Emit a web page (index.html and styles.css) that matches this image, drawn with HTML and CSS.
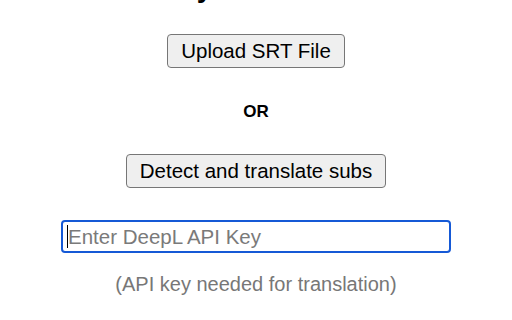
FILE: index.html
```html
<!DOCTYPE html>
<html>
<head>
<meta charset="utf-8">
<link rel="stylesheet" href="styles.css">
</head>
<body>
<main class="page">
  <h1 class="title">My Subtitles</h1>
  <button class="btn btn-upload">Upload SRT File</button>
  <div class="or">OR</div>
  <button class="btn btn-detect">Detect and translate subs</button>
  <span class="key-wrap"><input class="key" type="text" placeholder="Enter DeepL API Key"></span>
  <p class="hint">(API key needed for translation)</p>
</main>
</body>
</html>
```
FILE: styles.css
```css
html, body {
  margin: 0;
  padding: 0;
  background: #fff;
  overflow: hidden;
}
body {
  font-family: "Liberation Sans", Arial, sans-serif;
  color: #000;
}
.page {
  display: flex;
  flex-direction: column;
  align-items: center;
}
.title {
  margin: -28px 0 0;
  height: 32px;
  font-size: 28px;
  line-height: 32px;
  font-weight: bold;
}
.btn {
  font-family: "Liberation Sans", Arial, sans-serif;
  font-size: 20.5px;
  line-height: 24px;
  padding: 4px 13px;
  border: 1px solid #767676;
  border-radius: 4px;
  background: #efefef;
  color: #000;
}
.btn-upload {
  margin-top: 30px;
}
.or {
  margin-top: 34px;
  font-size: 17px;
  line-height: 20px;
  font-weight: bold;
}
.btn-detect {
  margin-top: 32px;
}
.key-wrap {
  position: relative;
  display: block;
  margin-top: 32px;
}
.key-wrap::after {
  content: "";
  position: absolute;
  left: 6px;
  top: 5px;
  width: 1px;
  height: 23px;
  background: #000;
}
.key {
  display: block;
  box-sizing: border-box;
  width: 390px;
  height: 33px;
  padding: 0 5px;
  border: 2px solid #1559d6;
  border-radius: 4px;
  font-family: "Liberation Sans", Arial, sans-serif;
  font-size: 20.5px;
  color: #000;
  outline: none;
}
.key::placeholder {
  color: #7a7a7a;
}
.hint {
  margin: 20px 0 0;
  font-size: 20px;
  line-height: 23px;
  color: #777;
}
```
